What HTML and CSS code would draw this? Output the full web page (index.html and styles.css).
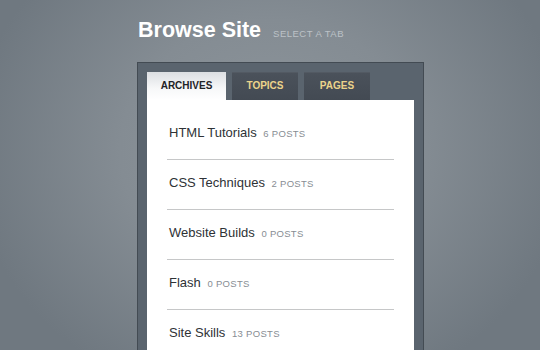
FILE: index.html
```html
<!DOCTYPE html>
<html lang="en">
<head>
    <meta charset="UTF-8">
    <meta name="viewport" content="width=device-width, initial-scale=1.0">
    <title>Browse Site</title>
    <link rel="stylesheet" href="styles.css">
</head>
<body>
    <div class="wrap">
        <header>
            <h1>Browse Site</h1>
            <span class="sub">Select a tab</span>
        </header>
        <div class="panel">
            <nav class="tabs">
                <a href="#archives" class="tab active">Archives</a>
                <a href="#topics" class="tab">Topics</a>
                <a href="#pages" class="tab">Pages</a>
            </nav>
            <div class="content" id="archives">
                <ul>
                    <li><a href="#">HTML Tutorials</a> <span class="count">6 posts</span></li>
                    <li><a href="#">CSS Techniques</a> <span class="count">2 posts</span></li>
                    <li><a href="#">Website Builds</a> <span class="count">0 posts</span></li>
                    <li><a href="#">Flash</a> <span class="count">0 posts</span></li>
                    <li><a href="#">Site Skills</a> <span class="count">13 posts</span></li>
                </ul>
            </div>
        </div>
    </div>
</body>
</html>
```

FILE: styles.css
```css
html, body {
    height: 100%;
}
body {
    font-family: "Liberation Sans", Arial, sans-serif;
    margin: 0;
    padding: 0;
    overflow: hidden;
    background-color: #7b848b;
    background-image: radial-gradient(ellipse 300px 260px at 270px 150px, #8e969c 0%, #848c93 50%, #6f7880 100%);
}
.wrap {
    margin-left: 137px;
    width: 287px;
}
header {
    display: flex;
    align-items: baseline;
    margin-top: 18px;
    padding-left: 1px;
}
header h1 {
    margin: 0;
    font-size: 21.5px;
    line-height: 24px;
    font-weight: bold;
    color: #fff;
}
header .sub {
    margin-left: 12px;
    font-size: 9.5px;
    letter-spacing: 0.5px;
    text-transform: uppercase;
    color: #bcc2c7;
}
.panel {
    margin-top: 20px;
    border: 1px solid #434b53;
    background-color: #5a646e;
    padding: 9px 9px 0 9px;
    height: 400px;
}
.tabs {
    display: flex;
    gap: 6px;
    align-items: flex-end;
}
.tab {
    display: block;
    height: 28px;
    line-height: 28px;
    text-align: center;
    text-decoration: none;
    text-transform: uppercase;
    font-size: 10px;
    font-weight: bold;
    width: 66px;
    color: #ecd48b;
    background: linear-gradient(#4b525b, #434a53);
    box-shadow: inset 0 1px 0 #535a63;
}
.tab.active {
    width: 79px;
    color: #1f2326;
    background: linear-gradient(#dcdfe2, #f7f8f9 60%, #fff);
    box-shadow: none;
}
.content {
    background: #fff;
    padding: 10px 20px 0 20px;
    height: 400px;
}
.content ul {
    list-style: none;
    margin: 0;
    padding: 0;
}
.content li {
    padding: 15px 0 18px 2px;
    font-size: 13px;
    line-height: 16px;
    border-bottom: 1px solid #c6c7c8;
}
.content li a {
    color: #2e3236;
    text-decoration: none;
}
.content li .count {
    margin-left: 3px;
    font-size: 9.5px;
    line-height: 10px;
    letter-spacing: 0.3px;
    text-transform: uppercase;
    color: #878d93;
}
```
